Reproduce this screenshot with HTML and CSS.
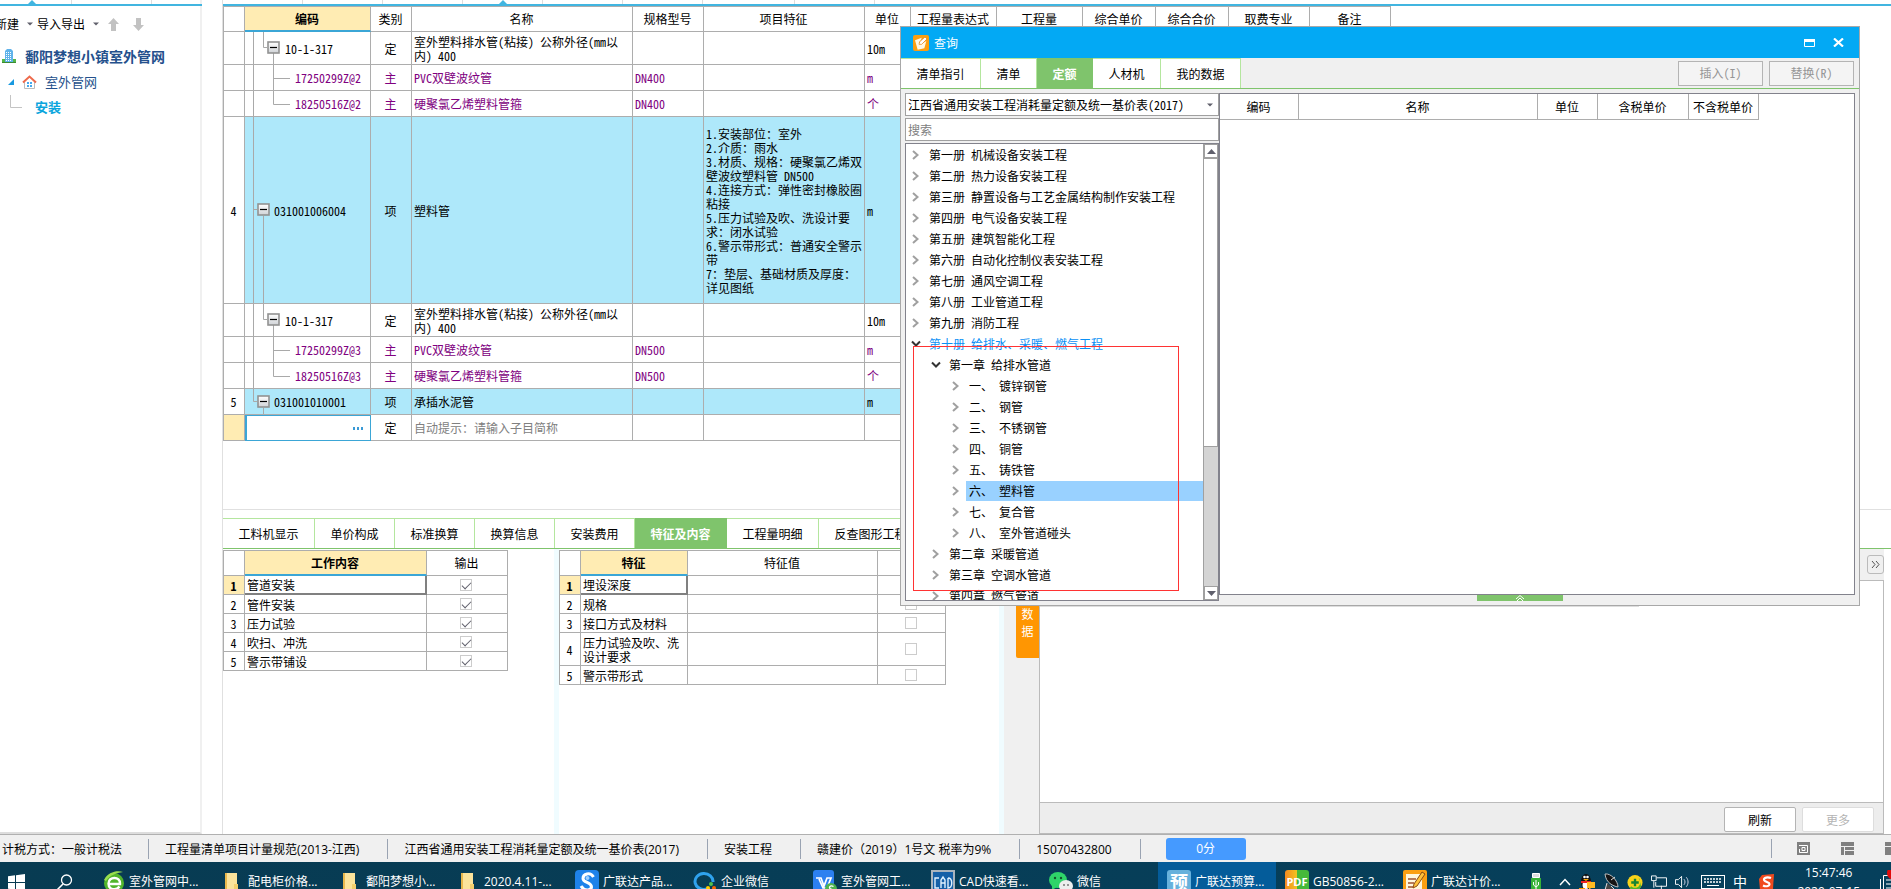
FILE: index.html
```html
<!DOCTYPE html>
<html lang="zh-CN">
<head>
<meta charset="utf-8">
<title>计价软件</title>
<link rel="stylesheet" href="styles.css">
</head>
<body>
<svg class="defs" width="0" height="0" aria-hidden="true">
  <defs>
    <linearGradient id="boxfill" x1="0" y1="0" x2="0" y2="1"><stop offset="0" stop-color="#fff"/><stop offset="1" stop-color="#cfd2d6"/></linearGradient>
    <symbol id="minus" viewBox="0 0 13 13"><rect x="1" y="1" width="11" height="11" fill="url(#boxfill)" stroke="#929292" stroke-width="1.6"/><path d="M3 6.5H10" stroke="#000" stroke-width="1.2"/></symbol>
    <symbol id="chev" viewBox="0 0 10 10"><path d="M2 1L6.500 5L2 9" fill="none" stroke="#a0a0a0" stroke-width="2"/></symbol>
    <symbol id="chevd" viewBox="0 0 10 10"><path d="M1 2.500L5 6.500L9 2.500" fill="none" stroke="#333" stroke-width="2"/></symbol>
    <symbol id="caret" viewBox="0 0 6 4"><path d="M0 0.5H6L3 3.5Z" fill="#60606c"/></symbol>
    <symbol id="folder" viewBox="0 0 21 24"><path d="M2 3H9V24H2Z" fill="#e9b84c"/><path d="M4 3H14V24H4Z" fill="#fbe39b"/><path d="M11 14H15V24H11Z" fill="#f3cf6d"/></symbol>
    <symbol id="note" viewBox="0 0 24 24"><rect width="24" height="24" rx="3" fill="#fb9f12"/><path d="M3 8L13 4L12 8L9 11L11 14L15 12L20 9L17 20L7 22Z" fill="#fff8e4"/><path d="M9 14L10 10L18 3L21 6L13 14Z" fill="#fff" stroke="#e07c0a" stroke-width="1"/></symbol>
  </defs>
</svg>

<div class="workspace">
  <aside class="side">
    <div class="strip strip-side"><i class="s71"></i><i class="s79"></i><svg class="mark mark-a" width="8" height="4"><path d="M4 0L8 4H0Z" fill="#41b5e0"/></svg></div>
    <div class="side-tools">
      <button type="button" class="tool">新建 <svg width="6" height="4"><use href="#caret"/></svg></button>
      <button type="button" class="tool">导入导出 <svg width="6" height="4"><use href="#caret"/></svg></button>
      <button type="button" class="tool" aria-label="上移"><svg width="11" height="13" viewBox="0 0 11 13"><path d="M5.500 0L11 6H8V13H3V6H0Z" fill="#c2c2c2"/></svg></button>
      <button type="button" class="tool" aria-label="下移"><svg width="11" height="13" viewBox="0 0 11 13"><path d="M5.500 13L0 7H3V0H8V7H11Z" fill="#c2c2c2"/></svg></button>
    </div>
    <div class="node node-root">
      <svg width="14" height="14" viewBox="0 0 14 14"><path d="M3 2L5 0H9L11 2V14H3Z" fill="#5fb2ea"/><path d="M4 3.500H10M4 5.500H10M4 7.500H10M4 9.500H10M4 11.500H10" stroke="#fff" stroke-width="1" stroke-dasharray="1 1"/><path d="M0 10H3V14H0ZM11 10H14V14H11Z" fill="#55b748"/><path d="M0 13.500H14" stroke="#3a8b33"/></svg>
      <span>鄱阳梦想小镇室外管网</span>
    </div>
    <div class="node node-unit">
      <svg width="6" height="6"><path d="M6 0V6H0Z" fill="#1899e0"/></svg>
      <svg width="15" height="14" viewBox="0 0 15 14"><path d="M2.500 6.500V13.500H12.500V6.500" fill="#fff" stroke="#bbb"/><path d="M1 7.500L7.500 1.500L14 7.500" fill="none" stroke="#ee6a4c" stroke-width="2"/><path d="M5 7H7V9H5ZM8 7H10V9H8ZM5 10H7V12H5ZM8 10H10V12H8Z" fill="#45a9ee"/></svg>
      <span>室外管网</span>
    </div>
    <div class="node node-leaf">
      <svg width="12" height="26"><path d="M.5 1V13.500H12" fill="none" stroke="#c4c4c4"/></svg>
      <span>安装</span>
    </div>
  </aside>

  <main class="main">
    <div class="strip"><i class="s79"></i><i class="s79"></i><i class="s79"></i><i class="s79"></i><i class="s79"></i><i class="s79"></i><i class="s91"></i><i class="s79"></i><svg class="mark mark-b" width="8" height="4"><path d="M4 0L8 4H0Z" fill="#41b5e0"/></svg></div>
    <div class="sheet-area">
      <table class="sheet">
        <colgroup><col class="w21"><col class="w126"><col class="w41"><col class="w221"><col class="w71"><col class="w161"><col class="w46"><col class="w86"><col class="w86"><col class="w73"><col class="w73"><col class="w81"><col class="w81"></colgroup>
        <thead><tr><th></th><th class="picked">编码</th><th>类别</th><th>名称</th><th>规格型号</th><th>项目特征</th><th>单位</th><th>工程量表达式</th><th>工程量</th><th>综合单价</th><th>综合合价</th><th>取费专业</th><th>备注</th></tr></thead>
        <tbody>
          <tr class="tall"><td></td><td class="code"><div><svg width="40" height="32"><path d="M8.500 0V32M18.500 0V15.500H22M28.500 21V32" fill="none" stroke="#a9a9a9"/><use href="#minus" x="22" y="9" width="13" height="13"/></svg><span>10-1-317</span></div></td><td class="c">定</td><td>室外塑料排水管(粘接) 公称外径(mm以<br>内) 400</td><td></td><td></td><td>10m</td><td></td><td></td><td></td><td></td><td></td><td></td></tr>
          <tr class="sub"><td></td><td class="code"><div><svg width="50" height="25"><path d="M8.500 0V25M28.500 0V25M28.500 13.500H45" fill="none" stroke="#a9a9a9"/></svg><span>17250299Z@2</span></div></td><td class="c">主</td><td>PVC双壁波纹管</td><td>DN400</td><td></td><td>m</td><td></td><td></td><td></td><td></td><td></td><td></td></tr>
          <tr class="sub"><td></td><td class="code"><div><svg width="50" height="25"><path d="M8.500 0V25M28.500 0V13.500H45" fill="none" stroke="#a9a9a9"/></svg><span>18250516Z@2</span></div></td><td class="c">主</td><td>硬聚氯乙烯塑料管箍</td><td>DN400</td><td></td><td>个</td><td></td><td></td><td></td><td></td><td></td><td></td></tr>
          <tr class="item huge"><td class="no">4</td><td class="code"><div><svg width="29" height="186"><path d="M8.500 0V186M8.500 92.500H12M18.500 99V186" fill="none" stroke="#a9a9a9"/><use href="#minus" x="12" y="86" width="13" height="13"/></svg><span>031001006004</span></div></td><td class="c">项</td><td>塑料管</td><td></td><td>1.安装部位：室外<br>2.介质：雨水<br>3.材质、规格：硬聚氯乙烯双<br>壁波纹塑料管 DN500<br>4.连接方式：弹性密封橡胶圈<br>粘接<br>5.压力试验及吹、洗设计要<br>求：闭水试验<br>6.警示带形式：普通安全警示<br>带<br>7：垫层、基础材质及厚度：<br>详见图纸</td><td>m</td><td></td><td></td><td></td><td></td><td></td><td></td></tr>
          <tr class="tall"><td></td><td class="code"><div><svg width="40" height="32"><path d="M8.500 0V32M18.500 0V15.500H22M28.500 21V32" fill="none" stroke="#a9a9a9"/><use href="#minus" x="22" y="9" width="13" height="13"/></svg><span>10-1-317</span></div></td><td class="c">定</td><td>室外塑料排水管(粘接) 公称外径(mm以<br>内) 400</td><td></td><td></td><td>10m</td><td></td><td></td><td></td><td></td><td></td><td></td></tr>
          <tr class="sub"><td></td><td class="code"><div><svg width="50" height="25"><path d="M8.500 0V25M28.500 0V25M28.500 13.500H45" fill="none" stroke="#a9a9a9"/></svg><span>17250299Z@3</span></div></td><td class="c">主</td><td>PVC双壁波纹管</td><td>DN500</td><td></td><td>m</td><td></td><td></td><td></td><td></td><td></td><td></td></tr>
          <tr class="sub"><td></td><td class="code"><div><svg width="50" height="25"><path d="M8.500 0V25M28.500 0V13.500H45" fill="none" stroke="#a9a9a9"/></svg><span>18250516Z@3</span></div></td><td class="c">主</td><td>硬聚氯乙烯塑料管箍</td><td>DN500</td><td></td><td>个</td><td></td><td></td><td></td><td></td><td></td><td></td></tr>
          <tr class="item"><td class="no">5</td><td class="code"><div><svg width="29" height="25"><path d="M8.500 0V12.500H12M18.500 19V25" fill="none" stroke="#a9a9a9"/><use href="#minus" x="12" y="6" width="13" height="13"/></svg><span>031001010001</span></div></td><td class="c">项</td><td>承插水泥管</td><td></td><td></td><td>m</td><td></td><td></td><td></td><td></td><td></td><td></td></tr>
          <tr><td class="picked"></td><td class="code editing"><div><input type="text" aria-label="编码"><button type="button" aria-label="选择子目"><svg width="11" height="3"><path d="M0 0H2V3H0ZM4 0H6V3H4ZM8 0H10V3H8Z" fill="#3a9ad6"/></svg></button></div></td><td class="c">定</td><td class="hint">自动提示：请输入子目简称</td><td></td><td></td><td></td><td></td><td></td><td></td><td></td><td></td><td></td></tr>
        </tbody>
      </table>
    </div>

    <nav class="tabs lower-tabs">
      <button type="button" class="t92">工料机显示</button><button type="button" class="t80">单价构成</button><button type="button" class="t80">标准换算</button><button type="button" class="t80">换算信息</button><button type="button" class="t80">安装费用</button><button type="button" class="t92 on">特征及内容</button><button type="button" class="t92">工程量明细</button><button type="button" class="t116">反查图形工程量</button>
    </nav>
    <div class="lower">
      <section class="pane pane-a">
        <table class="sheet small">
          <colgroup><col class="w21"><col class="w182"><col class="w81"></colgroup>
          <thead><tr><th></th><th class="picked">工作内容</th><th>输出</th></tr></thead>
          <tbody>
            <tr><td class="no picked">1</td><td class="current">管道安装</td><td class="c"><input type="checkbox" aria-label="输出 管道安装" checked></td></tr>
            <tr><td class="no">2</td><td>管件安装</td><td class="c"><input type="checkbox" aria-label="输出 管件安装" checked></td></tr>
            <tr><td class="no">3</td><td>压力试验</td><td class="c"><input type="checkbox" aria-label="输出 压力试验" checked></td></tr>
            <tr><td class="no">4</td><td>吹扫、冲洗</td><td class="c"><input type="checkbox" aria-label="输出 吹扫、冲洗" checked></td></tr>
            <tr><td class="no">5</td><td>警示带铺设</td><td class="c"><input type="checkbox" aria-label="输出 警示带铺设" checked></td></tr>
          </tbody>
        </table>
      </section>
      <section class="pane pane-b">
        <table class="sheet small">
          <colgroup><col class="w21"><col class="w107"><col class="w190"><col class="w68"></colgroup>
          <thead><tr><th></th><th class="picked">特征</th><th>特征值</th><th></th></tr></thead>
          <tbody>
            <tr><td class="no picked">1</td><td class="current">埋设深度</td><td></td><td class="c"><input type="checkbox" aria-label="输出 埋设深度"></td></tr>
            <tr><td class="no">2</td><td>规格</td><td></td><td class="c"><input type="checkbox" aria-label="输出 规格"></td></tr>
            <tr><td class="no">3</td><td>接口方式及材料</td><td></td><td class="c"><input type="checkbox" aria-label="输出 接口方式及材料"></td></tr>
            <tr class="tall"><td class="no">4</td><td>压力试验及吹、洗<br>设计要求</td><td></td><td class="c"><input type="checkbox" aria-label="输出 压力试验"></td></tr>
            <tr><td class="no">5</td><td>警示带形式</td><td></td><td class="c"><input type="checkbox" aria-label="输出 警示带形式"></td></tr>
          </tbody>
        </table>
      </section>
      <div class="rail"><button type="button">数<br>据</button></div>
      <section class="data">
        <div class="data-head"><button type="button" aria-label="展开"><svg width="9" height="9"><path d="M1 1L4 4.500L1 8M5 1L8 4.500L5 8" fill="none" stroke="#555"/></svg></button></div>
        <div class="data-body"><div class="data-line"></div></div>
        <div class="data-foot"><button type="button">刷新</button><button type="button" disabled>更多</button></div>
      </section>
    </div>
  </main>
</div>

<footer class="status">
  <span>计税方式：一般计税法</span><span>工程量清单项目计量规范(2013-江西)</span><span>江西省通用安装工程消耗量定额及统一基价表(2017)</span><span>安装工程</span><span>赣建价（2019）1号文 税率为9%</span><span>15070432800</span>
  <button type="button" class="score">0分</button>
  <div class="views">
    <svg width="13" height="13" viewBox="0 0 13 13"><rect width="13" height="13" fill="#808080"/><path d="M2 3.500H10.500V10.500H2.500V7M5 5.500H8V8.500H5Z" fill="none" stroke="#fff"/></svg>
    <svg width="13" height="13" viewBox="0 0 13 13"><path d="M0 0H13V4H0ZM0 5H3V13H0ZM4 5H13V8H4ZM4 9H13V13H4Z" fill="#808080"/></svg>
    <svg width="13" height="13" viewBox="0 0 13 13"><path d="M0 0H13V4H0ZM0 5H13V13H0Z" fill="#808080"/></svg>
  </div>
</footer>

<div class="taskbar"><div class="task-row">
  <button type="button" class="sys" aria-label="开始"><svg width="17" height="17" viewBox="0 0 17 17"><path d="M0 2.300L7 1.300V8H0ZM8 1.200L17 0V8H8ZM0 9H7V15.700L0 14.700ZM8 9H17V17L8 15.800Z" fill="#fff"/></svg></button>
  <button type="button" class="sys" aria-label="搜索"><svg width="17" height="17" viewBox="0 0 17 17"><circle cx="10.500" cy="6" r="5" fill="none" stroke="#fff" stroke-width="1.300"/><path d="M7 10L1 16" stroke="#fff" stroke-width="1.500"/></svg></button>
  <button type="button" class="app first"><svg width="22" height="24" viewBox="1 0 22 24"><circle cx="12" cy="13" r="10" fill="#52b52c"/><path d="M6.500 14H18C18.500 6 6.500 6 6.500 13.500C6.500 20 14 21 17.500 16.500" fill="none" stroke="#fff" stroke-width="2.400"/><path d="M2 10C6 2 15 0 21 2C14 3 8 5 4 11Z" fill="#9ade4f"/></svg>室外管网中...</button>
  <button type="button" class="app"><svg width="21" height="24"><use href="#folder"/></svg>配电柜价格...</button>
  <button type="button" class="app"><svg width="21" height="24"><use href="#folder"/></svg>鄱阳梦想小...</button>
  <button type="button" class="app"><svg width="21" height="24"><use href="#folder"/></svg>2020.4.11-...</button>
  <button type="button" class="app narrow"><svg width="24" height="24" viewBox="0 0 24 24"><rect width="24" height="24" rx="4" fill="#1e82ea"/><path d="M18.500 7C15 1.500 8 4 8 8.500C8 13 16.500 12 16.500 17C16 21 9 21 6 16" fill="none" stroke="#fff" stroke-width="3"/><circle cx="12.500" cy="8" r="2" fill="#9fd0ff"/></svg>广联达产品...</button>
  <button type="button" class="app narrow"><svg width="24" height="24" viewBox="0 0 24 24"><path d="M14 19A9 8 0 1 1 20 12" fill="none" stroke="#2fa2ee" stroke-width="3"/><circle cx="18" cy="14" r="2" fill="#4fc24f"/><circle cx="21" cy="18" r="2" fill="#fb6500"/><circle cx="15" cy="18" r="2" fill="#ffcc00"/><circle cx="18" cy="21" r="2" fill="#0082ef"/></svg>企业微信</button>
  <button type="button" class="app"><svg width="24" height="24" viewBox="0 0 24 24"><rect width="21" height="24" rx="3" fill="#2c80f0"/><path d="M3 8H8L11 16L14 8H18L14 18H10L6 9" fill="none" stroke="#fff" stroke-width="1.700"/><circle cx="18" cy="19" r="6" fill="#4db34d"/><path d="M20.500 16.500C17 14.500 15 18 18 19C21 20 18.500 23 15.500 21" fill="none" stroke="#fff" stroke-width="1.300"/></svg>室外管网工...</button>
  <button type="button" class="app"><svg width="24" height="24" viewBox="0 0 24 24"><rect x="1" y="1" width="22" height="24" fill="#1560a8" stroke="#aab4be" stroke-width="2"/><path d="M8 8H4V18H8M10 18V10L12 7L14 10V18M10 13H14M17 8V18C22 18 22 8 17 8" fill="none" stroke="#dff1ff" stroke-width="1.400"/></svg>CAD快速看...</button>
  <button type="button" class="app"><svg width="24" height="24" viewBox="0 0 24 24"><ellipse cx="9" cy="10" rx="9" ry="8" fill="#2fd469"/><path d="M3 15L3 20L8 17Z" fill="#2fd469"/><circle cx="6" cy="8" r="1.200" fill="#14532d"/><circle cx="12" cy="8" r="1.200" fill="#14532d"/><ellipse cx="17" cy="16" rx="7" ry="6" fill="#eee"/><circle cx="15" cy="15" r="1" fill="#777"/><circle cx="19" cy="15" r="1" fill="#777"/></svg>微信</button>
  <button type="button" class="app active"><span class="tile" aria-hidden="true">预</span>广联达预算...</button>
  <button type="button" class="app"><span class="tile pdf" aria-hidden="true">PDF</span>GB50856-2...</button>
  <button type="button" class="app"><svg width="24" height="24" viewBox="0 0 24 24"><rect width="24" height="24" rx="2" fill="#fb9f12"/><path d="M3 4H19V22H3Z" fill="#fff6dc"/><path d="M5 9H13M5 13H11M5 17H10" stroke="#a0522d" stroke-width="1.300"/><path d="M10 18L11 14L19 2L22 4L14 16Z" fill="#ffc23a" stroke="#8a4a10"/></svg>广联达计价...</button>
  <div class="tray">
    <svg class="usb" width="10" height="20" viewBox="0 0 10 20"><path d="M1.500 1.500H8.500V5.500H1.500Z" fill="#ddd" stroke="#fff"/><path d="M0 6H10V20H0Z" fill="#36b336"/><path d="M5 8V18M2.500 10V13L5 15L7.500 13V10" fill="none" stroke="#fff"/></svg>
    <svg width="12" height="8"><path d="M1 7L6 1.500L11 7" fill="none" stroke="#fff" stroke-width="1.500"/></svg>
    <svg width="16" height="18" viewBox="0 0 16 18"><ellipse cx="7" cy="9" rx="5" ry="8" fill="#111"/><ellipse cx="7" cy="12" rx="3.500" ry="4" fill="#fff"/><circle cx="5.500" cy="4" r="1.300" fill="#fff"/><circle cx="8.500" cy="4" r="1.300" fill="#fff"/><path d="M2 8H12V10H2Z" fill="#e22"/><path d="M4 6H10L7 8Z" fill="#fa0"/><path d="M8 9H16V15H12L10 17V15H8Z" fill="#fb2"/><path d="M0 15H6V17H0Z" fill="#f90"/></svg>
    <svg width="16" height="18" viewBox="0 0 16 18"><path d="M2 1C8 0 15 8 15 14C10 13 3 10 2 1Z" fill="#151515" stroke="#bbb"/><path d="M4 10L2 17H12L8 13" stroke="#ddd" fill="#444"/><path d="M8 7L12 4" stroke="#ddd"/></svg>
    <svg width="16" height="17" viewBox="0 0 17 17"><circle cx="8.500" cy="8.500" r="8" fill="#f7d31a"/><path d="M3 14A8 8 0 0 0 15 13L13 4Z" fill="#4cb42e"/><circle cx="8.500" cy="8.500" r="5.500" fill="#f7d31a"/><path d="M8.500 4.500V12.500M4.500 8.500H12.500" stroke="#168432" stroke-width="2.500"/></svg>
    <svg width="16" height="17" viewBox="0 0 17 17"><path d="M6 3.500H16.500V12.500H5V8M11 12V16M7 16.500H14M.5 1.500H5.500V6.500H.5ZM3 7V14" fill="none" stroke="#fff"/></svg>
    <svg width="16" height="16" viewBox="0 0 17 16"><path d="M.5 5.500H3.500L7 2V14L3.500 10.500H.5Z" fill="none" stroke="#fff"/><path d="M9.500 5C11 7 11 9 9.500 11M12 3C14.500 6 14.500 10 12 13" fill="none" stroke="#dde" /></svg>
    <svg class="keys" width="24" height="14" viewBox="0 0 24 14"><rect x=".5" y=".5" width="23" height="13" fill="none" stroke="#fff"/><path d="M3 4H21M3 7H21" stroke="#fff" stroke-dasharray="2 1" stroke-width="1.500"/><path d="M6 10.500H18" stroke="#fff"/></svg>
    <span class="ime">中</span>
    <svg width="16" height="16" viewBox="0 0 16 16"><path d="M3 1L15 0L14 15L1 16L0 5Z" fill="#f04a1d"/><path d="M12 4C7 2 3 5 6 7L10 9C12 12 7 13 4 11.500" fill="none" stroke="#fff" stroke-width="2.200"/></svg>
    <span class="clock">15:47:46<br>2020-07-15</span>
    <svg class="notice" width="11" height="24" viewBox="0 0 11 24"><path d="M3.500 5.500H20V23H3.500ZM.5 9V20M6 10H17M6 14H17M6 18H17" fill="none" stroke="#fff"/><circle cx="14" cy="3" r="7" fill="#e00b0b"/></svg>
  </div>
</div></div>

<div class="dialog" role="dialog" aria-labelledby="dlg-title">
  <header class="dlg-title">
    <svg width="16" height="16"><use href="#note"/></svg><h1 id="dlg-title">查询</h1>
    <button type="button" aria-label="最大化"><svg width="11" height="8"><path d="M.5 .5H10.500V7.500H.5Z" fill="none" stroke="#fff"/><path d="M0 0H11V3H0Z" fill="#fff"/></svg></button>
    <button type="button" aria-label="关闭"><svg width="11" height="9"><path d="M1 .5L10 8.500M10 .5L1 8.500" stroke="#fff" stroke-width="2.200"/></svg></button>
  </header>
  <div class="tabs dlg-tabs">
    <button type="button" class="t80">清单指引</button><button type="button" class="t56">清单</button><button type="button" class="t56 on">定额</button><button type="button" class="t68">人材机</button><button type="button" class="t80">我的数据</button>
    <div class="dlg-actions"><button type="button" disabled>插入(I)</button><button type="button" disabled>替换(R)</button></div>
  </div>
  <div class="dlg-body">
    <div class="picker">
      <div class="combo"><select aria-label="定额库"><option>江西省通用安装工程消耗量定额及统一基价表(2017)</option></select><svg width="6" height="4"><use href="#caret"/></svg></div>
      <input class="search" type="text" placeholder="搜索" aria-label="搜索">
      <div class="tree">
        <ul>
          <li><svg><use href="#chev"/></svg><span>第一册 机械设备安装工程</span></li>
          <li><svg><use href="#chev"/></svg><span>第二册 热力设备安装工程</span></li>
          <li><svg><use href="#chev"/></svg><span>第三册 静置设备与工艺金属结构制作安装工程</span></li>
          <li><svg><use href="#chev"/></svg><span>第四册 电气设备安装工程</span></li>
          <li><svg><use href="#chev"/></svg><span>第五册 建筑智能化工程</span></li>
          <li><svg><use href="#chev"/></svg><span>第六册 自动化控制仪表安装工程</span></li>
          <li><svg><use href="#chev"/></svg><span>第七册 通风空调工程</span></li>
          <li><svg><use href="#chev"/></svg><span>第八册 工业管道工程</span></li>
          <li><svg><use href="#chev"/></svg><span>第九册 消防工程</span></li>
          <li class="open"><svg><use href="#chevd"/></svg><span>第十册 给排水、采暖、燃气工程</span></li>
          <li class="l2"><svg><use href="#chevd"/></svg><span>第一章 给排水管道</span></li>
          <li class="l3"><svg><use href="#chev"/></svg><span>一、 镀锌钢管</span></li>
          <li class="l3"><svg><use href="#chev"/></svg><span>二、 钢管</span></li>
          <li class="l3"><svg><use href="#chev"/></svg><span>三、 不锈钢管</span></li>
          <li class="l3"><svg><use href="#chev"/></svg><span>四、 铜管</span></li>
          <li class="l3"><svg><use href="#chev"/></svg><span>五、 铸铁管</span></li>
          <li class="l3 sel"><svg><use href="#chev"/></svg><span>六、 塑料管</span></li>
          <li class="l3"><svg><use href="#chev"/></svg><span>七、 复合管</span></li>
          <li class="l3"><svg><use href="#chev"/></svg><span>八、 室外管道碰头</span></li>
          <li class="l2"><svg><use href="#chev"/></svg><span>第二章 采暖管道</span></li>
          <li class="l2"><svg><use href="#chev"/></svg><span>第三章 空调水管道</span></li>
          <li class="l2"><svg><use href="#chev"/></svg><span>第四章 燃气管道</span></li>
        </ul>
        <div class="scroll">
          <button type="button" aria-label="向上滚动"><svg width="9" height="5"><path d="M4.500 0L9 5H0Z" fill="#60606c"/></svg></button>
          <div class="thumb"></div><div class="track"></div>
          <button type="button" aria-label="向下滚动"><svg width="9" height="5"><path d="M0 0H9L4.500 5Z" fill="#60606c"/></svg></button>
        </div>
        <div class="redbox"></div>
      </div>
    </div>
    <div class="result">
      <div class="result-box">
        <table class="sheet result-sheet">
          <colgroup><col class="w79"><col class="w239"><col class="w60"><col class="w91"><col class="w70"></colgroup>
          <thead><tr><th>编码</th><th>名称</th><th>单位</th><th>含税单价</th><th>不含税单价</th></tr></thead>
        </table>
      </div>
      <button type="button" class="expand" aria-label="展开"><svg width="10" height="6"><path d="M1 4L5 .5L9 4M2 6L5 3L8 6" fill="none" stroke="#fff"/></svg></button>
    </div>
  </div>
</div>
</body>
</html>
```
FILE: styles.css
```css
* { box-sizing: border-box; }

body {
  margin: 0;
  height: 100vh;
  display: flex;
  flex-direction: column;
  overflow: hidden;
  position: relative;
  background: #fff;
  color: #000;
  font: 12px/14px "Noto Sans Mono CJK SC", "Noto Sans CJK SC", sans-serif;
}

button, input, select {
  font: inherit;
  color: inherit;
  margin: 0;
  padding: 0;
  border: 0;
  border-radius: 0;
  background: none;
  outline: 0;
}

.defs { position: absolute; }
svg { display: block; flex: none; }

.workspace { flex: 1; display: flex; gap: 20px; min-height: 0; }

/* cut-off ribbon tabs above both panes */
.strip {
  height: 6px;
  flex: none;
  display: flex;
  position: relative;
  border-bottom: 2px solid #41b5e0;
}
.strip i { border-right: 1px solid #ddd; flex: none; }
.s71 { width: 72px; }
.s79 { width: 80px; }
.s91 { width: 92px; }
.mark { position: absolute; top: 0; }
.mark-a { left: 28px; }
.mark-b { left: 276px; }

/* project tree */
.side {
  width: 202px;
  flex: none;
  border-right: 2px solid #f0f0f0;
  border-bottom: 2px solid #ddd;
}
.strip-side { width: 202px; }
.side-tools { display: flex; align-items: center; height: 36px; margin-left: -5px; }
.tool { display: flex; align-items: center; gap: 8px; margin-right: 4px; }
.tool:nth-child(2) { margin-right: 9px; }
.tool:nth-child(3) { margin-right: 14px; }
.node { display: flex; align-items: center; color: #24508c; }
.node-root { height: 27px; gap: 9px; padding-left: 2px; font-size: 14px; font-weight: bold; }
.node-unit { height: 26px; gap: 8px; padding-left: 8px; font-size: 13px; }
.node-leaf { height: 24px; gap: 13px; padding-left: 10px; font-size: 13px; font-weight: bold; color: #0aa5dd; }

.main {
  flex: 1;
  min-width: 0;
  display: flex;
  flex-direction: column;
  border-left: 1px solid #e0e0e0;
}
.sheet-area { flex: none; height: 504px; border-bottom: 1px solid #e0e0e0; margin-bottom: 8px; overflow: hidden; }

/* grids */
.sheet {
  border-collapse: separate;
  border-spacing: 0;
  table-layout: fixed;
  width: min-content;
  border-left: 1px solid #adadad;
  border-top: 1px solid #adadad;
}
.sheet th, .sheet td {
  border-right: 1px solid #adadad;
  border-bottom: 1px solid #adadad;
  height: 26px;
  padding: 1px 1px 0 2px;
  font-weight: normal;
  white-space: nowrap;
  overflow: hidden;
}
.sheet th { height: 25px; padding: 0 1px 0 0; text-align: center; }
.sheet .picked { background: #ffecb3; font-weight: bold; }
.sheet th.picked { border-bottom: 2px solid #3ba6d6; }
.sheet .c, .sheet .no { text-align: center; padding: 1px 1px 0 0; }
.sheet .tall td { height: 33px; }
.sheet .huge td { height: 187px; padding-top: 2px; }
.sheet .sub { color: #800080; }
.sheet .item td:not(.no) { background: #aee8fa; }
.sheet .hint { color: #808080; }
.sheet td.code { padding: 0; }
.code div { display: flex; align-items: center; }
.code span { padding-top: 1px; }
.sheet td.editing { border: 1px solid #3ba6d6; border-left-width: 2px; }
.editing input { flex: 1; min-width: 0; }
.editing button { padding: 0 6px; }
.sheet.small td { height: 19px; }
.sheet.small .tall td { height: 33px; }
.sheet.small td.c { padding: 0 2px 0 0; }
.sheet td.current { border-right: 2px solid #808080; border-bottom: 2px solid #808080; }
.w21 { width: 21px; } .w41 { width: 41px; } .w46 { width: 46px; } .w60 { width: 60px; }
.w68 { width: 68px; } .w70 { width: 70px; } .w71 { width: 71px; } .w73 { width: 73px; }
.w79 { width: 79px; } .w81 { width: 81px; } .w86 { width: 86px; } .w91 { width: 91px; }
.w107 { width: 107px; } .w126 { width: 126px; } .w161 { width: 161px; } .w182 { width: 182px; }
.w190 { width: 190px; } .w221 { width: 221px; } .w239 { width: 239px; }

input[type="checkbox"] {
  appearance: none;
  display: block;
  width: 12px;
  height: 12px;
  margin: 0 auto;
  border: 1px solid #ccc;
  position: relative;
}
input[type="checkbox"]:checked::after {
  content: "";
  position: absolute;
  left: 3px;
  top: 0;
  width: 4px;
  height: 8px;
  border: solid #60606c;
  border-width: 0 1px 1px 0;
  transform: rotate(45deg);
}

/* tab bars */
.tabs { display: flex; flex: none; height: 31px; border-bottom: 1px solid #7fc46c; }
.tabs > button {
  flex: none;
  background: #fff;
  border-top: 1px solid #b4e69e;
  border-right: 1px solid #b4e69e;
}
.tabs > button.on { background: #7fc46c; color: #fff; font-weight: bold; border-color: #7fc46c; }
.t92 { width: 92px; }
.t80 { width: 80px; } .t116 { width: 116px; } .t56 { width: 56px; } .t68 { width: 68px; }

.lower { flex: 1; display: flex; min-height: 0; }
.pane { padding-top: 1px; flex: none; border-right: 5px solid #f0fcff; }
.pane-a { width: 336px; }
.pane-b { width: 445px; }
.rail { width: 35px; flex: none; padding: 49px 0 0 12px; background: #f0f0f0; }
.rail button {
  width: 23px;
  height: 60px;
  padding-bottom: 12px;
  line-height: 17px;
  color: #fff;
  background: #ff9602;
  border-radius: 0 0 0 2px;
}
.data { flex: 1; display: flex; flex-direction: column; min-width: 0; margin-right: 7px; }
.data-head { height: 31px; flex: none; background: #f0f0f0; display: flex; justify-content: flex-end; align-items: center; }
.data-head button { padding: 4px 3px; border: 1px solid #bbb; border-radius: 3px; }
.data-body { flex: 1; border: 1px solid #bbb; }
.data-line { width: 71%; height: 26px; border-bottom: 1px solid #ddd; }
.data-foot {
  flex: none;
  display: flex;
  justify-content: flex-end;
  gap: 6px;
  padding: 4px 9px 1px;
  background: #ededed;
  border: solid #bbb;
  border-width: 0 1px 1px;
}
.data-foot button { width: 72px; height: 25px; background: #fff; border: 1px solid #b4b4b4; border-radius: 2px; }
.data-foot button:disabled { color: #b4b4b4; border-color: #ddd; }

/* status bar */
.status {
  flex: none;
  height: 28px;
  display: flex;
  align-items: center;
  border-top: 1px solid #b0b0b0;
  background: #f0f0f0;
  font-family: "Open Sans", "Noto Sans CJK SC", sans-serif;
}
.status > span { padding: 4px 28px 2px 16px; border-right: 1px solid #9aa3b2; white-space: nowrap; }
.status > span:first-child { padding-left: 2px; padding-right: 26px; }
.score { width: 80px; height: 22px; margin-left: 25px; color: #fff; background: #459aff; border-radius: 3px; }
.views { display: flex; gap: 31px; margin-left: auto; margin-right: -7px; padding: 3px 0 3px 25px; border-left: 1px solid #9aa3b2; }

/* taskbar, lower part runs off screen */
.taskbar {
  flex: none;
  height: 27px;
  overflow: hidden;
  background: linear-gradient(90deg, #083b52, #06405c);
  color: #fff;
  font-family: "Open Sans", "Noto Sans CJK SC", sans-serif;
}
.task-row { display: flex; height: 40px; }
.sys { width: 48px; padding-left: 8px; flex: none; }
.app { display: flex; align-items: center; gap: 4px; width: 118px; padding-left: 9px; flex: none; white-space: nowrap; }
.app.first, .app.narrow { padding-left: 7px; }
.app.active { background: #045c9a; }
.tile { flex: none; width: 24px; height: 24px; line-height: 24px; font-size: 18px; font-weight: bold; text-align: center; border-radius: 3px; background: #67b1dc; }
.tile.pdf { font-size: 11px; background: linear-gradient(90deg, #f58a1f, #f2c321 50%, #46b93a 50%); }
.tray { flex: 1; display: flex; align-items: center; gap: 8px; padding-left: 19px; }
.usb { margin-right: 10px; }
.keys { margin-left: 2px; }
.ime { font-size: 14px; padding: 0 4px 0 0; }
.clock { margin-left: auto; line-height: 19px; text-align: center; }
.notice { margin-left: 12px; }

/* query dialog */
.dialog {
  position: absolute;
  left: 900px;
  top: 26px;
  width: 960px;
  height: 580px;
  display: flex;
  flex-direction: column;
  border: 1px solid #a8a8a8;
  background: #f0f0f0;
}
.dlg-title {
  height: 31px;
  flex: none;
  display: flex;
  align-items: center;
  gap: 5px;
  padding: 0 15px 0 12px;
  color: #fff;
  background: #03a9f4;
}
.dlg-title h1 { flex: 1; margin: 0; font-size: 12px; font-weight: normal; }
.dlg-title button + button { margin-left: 13px; }
.dlg-actions { display: flex; align-items: center; gap: 6px; margin-left: auto; padding-right: 5px; }
.dlg-actions button { width: 85px; height: 25px; color: #969696; background: #f4f4f4; border: 1px solid #b4b4b4; }
.dlg-body { flex: 1; display: flex; min-height: 0; padding: 4px; }
.picker { width: 314px; flex: none; display: flex; flex-direction: column; gap: 2px; }
.combo { position: relative; }
.combo svg { position: absolute; right: 6px; top: 10px; }
.combo select { appearance: none; display: block; width: 100%; height: 23px; padding: 0 2px; border: 1px solid #a0a0a0; background: #fff; }
.search { height: 23px; padding: 0 2px; border: 1px solid #a0a0a0; background: #fff; }
.search::placeholder { color: #808080; opacity: 1; }
.tree { flex: 1; min-height: 0; display: flex; position: relative; overflow: hidden; border: 1px solid #82828c; background: #fff; }
.tree ul { flex: 1; list-style: none; margin: 0; padding: 0; }
.tree li { display: flex; align-items: center; height: 21px; padding-left: 5px; white-space: nowrap; }
.tree li svg { width: 10px; height: 10px; margin-right: 5px; }
.tree li span { flex: 1; padding: 3px 3px; }
.tree .open { color: #0a90f5; }
.tree .l2 { padding-left: 25px; }
.tree .l3 { padding-left: 45px; }
.tree .sel span { background: #99d1ff; }
.scroll { width: 15px; display: flex; flex-direction: column; border-left: 1px solid #a0a0a0; }
.scroll button { height: 14px; flex: none; display: flex; align-items: center; justify-content: center; border: 1px solid #a0a0a0; background: #fff; }
.thumb { flex: 288; border: 1px solid #a0a0a0; border-left: 0; background: #fff; }
.track { flex: 140; background: #d4d4d4; }
.redbox { position: absolute; left: 7px; top: 202px; width: 266px; height: 245px; border: 1px solid #f33; }
.result { flex: 1; display: flex; flex-direction: column; min-width: 0; }
.result-box { flex: 1; border: 1px solid #82828c; background: #fff; }
.result-sheet { border: 0; }
.result-sheet th { height: 26px; }
.expand { width: 86px; height: 6px; margin-left: 258px; display: flex; justify-content: center; background: #7fc46c; }
```
